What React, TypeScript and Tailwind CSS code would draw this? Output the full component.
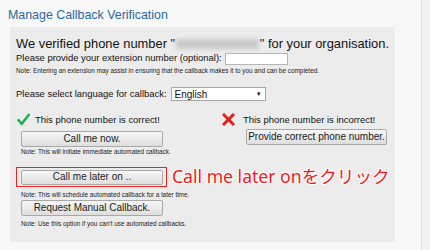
const arial = { fontFamily: '"Liberation Sans", Arial, sans-serif' };

function CheckIcon() {
  return (
    <svg width="13" height="13" viewBox="0 0 13 13" className="shrink-0">
      <path d="M1.5 7.2 L4.8 10.8 L11.8 1.8" fill="none" stroke="#22b14c" strokeWidth="2.6" strokeLinecap="round" strokeLinejoin="round" />
    </svg>
  );
}

function CrossIcon() {
  return (
    <svg width="13" height="13" viewBox="0 0 13 13" className="shrink-0">
      <path d="M2 2 L11 11 M11 2 L2 11" fill="none" stroke="#e3201b" strokeWidth="3" strokeLinecap="square" />
    </svg>
  );
}

function Btn({ label, className = "" }: { label: string; className?: string }) {
  return (
    <button
      className={
        "h-[15px] border border-[#a8a8a8] rounded-[2px] bg-gradient-to-b from-[#f7f7f7] to-[#dedede] text-[10px] leading-none text-[#1a1a1a] whitespace-nowrap flex items-center justify-center " +
        className
      }
    >
      {label}
    </button>
  );
}

function Note({ children, className = "" }: { children: React.ReactNode; className?: string }) {
  return <p className={"text-[6.4px] leading-[8px] text-[#222] whitespace-nowrap " + className}>{children}</p>;
}

export default function App() {
  return (
    <div className="w-[430px] h-[250px] bg-[#f8f8f8] flex overflow-hidden" style={arial}>
      <div className="w-[421px] shrink-0">
        <h1 className="text-[12.4px] leading-[15px] text-[#2a6aa0] pl-[8px] pt-[8px]">
          Manage Callback Verification
        </h1>

        <div className="ml-[10px] mt-[4px] w-[385px] h-[215px] bg-[#ececec] px-[6px] pt-[9px]">
          {/* Heading */}
          <p className="text-[12.9px] leading-[15px] text-[#111] whitespace-nowrap flex items-center">
            We verified phone number "
            <span className="inline-block w-[86px] h-[10px] bg-[#c9c9c9] blur-[2px] mx-[1px]" />
            " for your organisation.
          </p>

          {/* Extension */}
          <div className="flex items-center mt-[1px] h-[13px]">
            <span className="text-[9.45px] text-[#111] whitespace-nowrap">
              Please provide your extension number (optional):
            </span>
            <input className="ml-[3px] w-[63px] h-[12px] bg-white border border-[#b5b5b5]" />
          </div>
          <Note className="mt-[2px]">
            Note: Entering an extension may assist in ensuring that the callback makes it to you and can be completed.
          </Note>

          {/* Language */}
          <div className="flex items-center mt-[12px] h-[14px]">
            <span className="text-[9.45px] text-[#111] whitespace-nowrap">Please select language for callback:</span>
            <div className="ml-[4px] w-[95px] h-[14px] bg-white border border-[#a8a8a8] flex items-center justify-between px-[3px]">
              <span className="text-[10px] text-[#111]">English</span>
              <span className="text-[6px] text-[#111]">▼</span>
            </div>
          </div>

          {/* Options */}
          <div className="flex mt-[11px]">
            <div className="w-[206px] shrink-0">
              <div className="flex items-center gap-[5px] pl-[1px] h-[14px]">
                <CheckIcon />
                <span className="text-[9.45px] text-[#111] mt-[3px]">This phone number is correct!</span>
              </div>
              <div className="pl-[5px]">
                <Btn label="Call me now." className="w-[142px] mt-[5px] h-[16px]" />
                <Note className="mt-[1px]">Note: This will initiate immediate automated callback.</Note>

                <div className="relative -ml-[5px] mt-[11px] w-[151px] h-[20px] border border-[#e8261f] flex items-center pl-[4px]">
                  <Btn label="Call me later on .." className="w-[142px] h-[14px]" />
                  <span
                    className="absolute left-[155px] top-[-5px] whitespace-nowrap text-[17.6px] leading-[26px] text-[#ff1414]"
                    style={{
                      fontFamily: '"Noto Sans", "Noto Sans CJK JP", sans-serif',
                      textShadow:
                        "1px 0 0 #fff, -1px 0 0 #fff, 0 1px 0 #fff, 0 -1px 0 #fff, 1px 1px 0 #fff, -1px -1px 0 #fff, 1px -1px 0 #fff, -1px 1px 0 #fff",
                    }}
                  >
                    Call me later onをクリック
                  </span>
                </div>
                <Note className="mt-[4px]">Note: This will schedule automated callback for a later time.</Note>
                <Btn label="Request Manual Callback." className="w-[142px] mt-[1px] h-[16px]" />
                <Note className="mt-[4px]">Note: Use this option if you can't use automated callbacks.</Note>
              </div>
            </div>
            <div>
              <div className="flex items-center gap-[8px] h-[14px]">
                <CrossIcon />
                <span className="text-[9.45px] text-[#111] mt-[3px]">This phone number is incorrect!</span>
              </div>
              <Btn label="Provide correct phone number." className="ml-[24px] mt-[3px] w-[141px] h-[16px]" />
            </div>
          </div>
        </div>
      </div>
      <div className="flex-1 border-l border-[#e2e2e2] bg-[#f2f2f2]" />
    </div>
  );
}
